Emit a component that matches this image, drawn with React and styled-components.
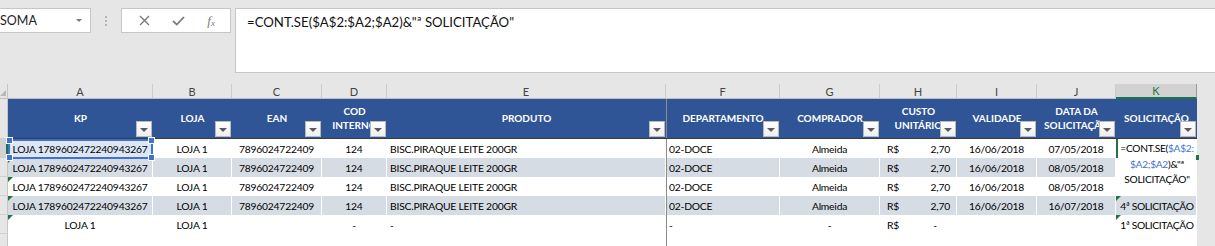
import React from 'react';
import styled, { createGlobalStyle, css } from 'styled-components';

const COLS = [145, 79, 90, 65, 279, 114, 100, 77, 80, 79, 81];
const LETTERS = ['A', 'B', 'C', 'D', 'E', 'F', 'G', 'H', 'I', 'J', 'K'];
const GRID = `8px ${COLS.map((w) => `${w}px`).join(' ')} 1fr`;
const GREEN = '#217346';
const REF_BLUE = '#3f73d0';

const HEADERS = [
  ['KP'],
  ['LOJA'],
  ['EAN'],
  ['COD', 'INTERNO'],
  ['PRODUTO'],
  ['DEPARTAMENTO'],
  ['COMPRADOR'],
  ['CUSTO', 'UNITÁRIO'],
  ['VALIDADE'],
  ['DATA DA', 'SOLICITAÇÃO'],
  ['SOLICITAÇÃO'],
];

const item = (data, sol) => ({
  kp: 'LOJA 1789602472240943267',
  loja: 'LOJA 1',
  ean: '7896024722409',
  cod: '124',
  produto: 'BISC.PIRAQUE LEITE 200GR',
  dep: '02-DOCE',
  comp: 'Almeida',
  custo: '2,70',
  val: '16/06/2018',
  data,
  sol,
});

const ROWS = [
  item('07/05/2018', null),
  item('08/05/2018', null),
  item('08/05/2018', null),
  item('16/07/2018', '4ª SOLICITAÇÃO'),
  {
    kp: 'LOJA 1',
    loja: 'LOJA 1',
    ean: '',
    cod: '-',
    produto: '-',
    dep: '-',
    comp: '-',
    custo: '-',
    val: '',
    data: '',
    sol: '1ª SOLICITAÇÃO',
  },
];

const GlobalStyle = createGlobalStyle`
  html, body {
    margin: 0;
    padding: 0;
    background: #e6e6e6;
    overflow: hidden;
  }
  body {
    font-family: Lato, "Liberation Sans", sans-serif;
    color: #000;
  }
`;

const Page = styled.div`
  width: 1215px;
  height: 246px;
  overflow: hidden;
  background: #e6e6e6;
`;

/* ---------- formula bar ---------- */

const Toolbar = styled.div`
  height: 84px;
  display: flex;
  align-items: flex-start;
  padding-top: 8px;
  box-sizing: border-box;
`;

const NameBox = styled.div`
  width: 97px;
  height: 25px;
  margin-left: -6px;
  box-sizing: border-box;
  border: 1px solid #c6c6c6;
  background: #fff;
  display: flex;
  align-items: center;
  justify-content: space-between;
  padding: 0 8px 0 5px;
  font-size: 12.5px;
  color: #222;

  &::after {
    content: '';
    border-top: 3px solid #7a7a7a;
    border-left: 3px solid transparent;
    border-right: 3px solid transparent;
  }
`;

const Grip = styled.div`
  width: 2px;
  height: 10px;
  margin: 8px 14px 0 14px;
  background: repeating-linear-gradient(#b4b4b4 0 2px, transparent 2px 4px);
`;

const ActionBox = styled.div`
  width: 110px;
  height: 25px;
  box-sizing: border-box;
  border: 1px solid #c6c6c6;
  background: #fff;
  display: flex;
  align-items: center;
  justify-content: space-around;
  padding: 0 4px 0 6px;
  color: #7a7a7a;
`;

const Fx = styled.span`
  font-family: "Liberation Serif", serif;
  font-style: italic;
  font-size: 13px;
  color: #7a7a7a;

  sub {
    font-size: 9px;
    vertical-align: baseline;
    position: relative;
    top: 1px;
  }
`;

const FormulaInput = styled.div`
  flex: 1;
  height: 65px;
  margin-left: 4px;
  margin-right: -4px;
  box-sizing: border-box;
  border: 1px solid #c6c6c6;
  background: #fff;
  padding: 5px 0 0 11px;
  font-size: 13.2px;
  color: #111;
  white-space: pre;
`;

/* ---------- sheet ---------- */

const Row = styled.div`
  display: grid;
  grid-template-columns: ${GRID};
  height: ${(p) => p.$h}px;
`;

const Corner = styled.div`
  position: relative;
  border-right: 1px solid #c6c6c6;
  border-bottom: 1px solid #bdbdbd;

  &::after {
    content: '';
    position: absolute;
    right: 1px;
    bottom: 2px;
    border-bottom: 6px solid #b8b8b8;
    border-left: 6px solid transparent;
  }
`;

const ColLetter = styled.div`
  display: flex;
  align-items: center;
  justify-content: center;
  font-size: 11px;
  color: #444;
  border-right: 1px solid #cbcbcb;
  border-bottom: 1px solid #bdbdbd;
  box-sizing: border-box;
  ${(p) =>
    p.$active &&
    css`
      background: #d2d2d2;
      color: ${GREEN};
      border-bottom: 2px solid ${GREEN};
      border-right-color: #9b9b9b;
    `}
`;

const Gray = styled.div`
  background: #e6e6e6;
`;

const RowHead = styled.div`
  background: ${(p) => (p.$active ? '#d2d2d2' : '#e6e6e6')};
  border-bottom: 1px solid #d0d0d0;
  border-right: ${(p) => (p.$active ? `2px solid ${GREEN}` : '1px solid #c6c6c6')};
  box-sizing: border-box;
`;

const HeadCell = styled.div`
  position: relative;
  background: #2f5597;
  color: #fff;
  font-weight: 700;
  font-size: 10px;
  line-height: 13.5px;
  text-align: center;
  display: flex;
  flex-direction: column;
  align-items: center;
  justify-content: center;
  padding-bottom: 1px;
  white-space: nowrap;
  overflow: hidden;
  box-shadow: inset 0 -1px 0 #3a3a3a ${(p) => (p.$freeze ? ', inset 1px 0 0 #8c8c8c' : '')};
`;

const FilterButton = styled.span`
  position: absolute;
  right: 1px;
  bottom: 2px;
  width: 16px;
  height: 16px;
  box-sizing: border-box;
  border: 1px solid #b9b9b9;
  background: linear-gradient(#fefefe, #eeeeee);
  display: flex;
  align-items: center;
  justify-content: center;

  &::after {
    content: '';
    margin-top: 2px;
    border-top: 4px solid #5a5a5a;
    border-left: 4px solid transparent;
    border-right: 4px solid transparent;
  }
`;

const Cell = styled.div`
  position: relative;
  display: flex;
  align-items: center;
  justify-content: ${(p) =>
    p.$align === 'left' ? 'flex-start' : p.$align === 'between' ? 'space-between' : 'center'};
  padding: 1px ${(p) => (p.$align === 'between' ? '6px 0 7px' : '3px 0')};
  box-sizing: border-box;
  font-size: 10.3px;
  letter-spacing: -0.2px;
  white-space: nowrap;
  background: ${(p) => (p.$band ? '#d6dce4' : '#fff')};
  border-right: 1px solid #fff;
  ${(p) => p.$freeze && css`box-shadow: inset 1px 0 0 #8c8c8c;`}

  ${(p) =>
    p.$flag &&
    css`
      &::before {
        content: '';
        position: absolute;
        top: 0;
        left: 0;
        border-top: 5px solid ${GREEN};
        border-right: 5px solid transparent;
      }
    `}
`;

const Selected = styled(Cell)`
  background: #dce6f4;
  z-index: 2;
`;

const RefBox = styled.div`
  position: absolute;
  inset: 0 -1px -1px 0;
  border: 2px solid ${REF_BLUE};
  pointer-events: none;
`;

const Handle = styled.span`
  position: absolute;
  width: 5px;
  height: 5px;
  background: ${REF_BLUE};
  border: 1px solid #fff;
  ${(p) => (p.$top ? 'top: -4px;' : 'bottom: -4px;')}
  ${(p) => (p.$left ? 'left: -4px;' : 'right: -4px;')}
`;

const Dash = styled.span`
  margin-right: 13px;
`;

const EditCell = styled(Cell)`
  z-index: 3;
  box-shadow: inset 2px 0 0 ${GREEN};
`;

const Editor = styled.div`
  position: absolute;
  top: 0;
  left: 2px;
  width: 78px;
  height: 57px;
  background: #fff;
  padding-top: 2px;
  box-sizing: border-box;
  text-align: center;
  font-size: 10.2px;
  letter-spacing: -0.3px;
  line-height: 15.5px;
  white-space: nowrap;
`;

const FillHandle = styled.span`
  position: absolute;
  right: -3px;
  top: 16px;
  width: 3px;
  height: 5px;
  background: ${GREEN};
`;

const Ref = styled.span`
  color: ${REF_BLUE};
`;

const SolCell = styled(Cell)`
  letter-spacing: -0.35px;
  padding-left: 5px;
`;

const XIcon = () => (
  <svg width="11" height="11" viewBox="0 0 11 11">
    <path d="M1 1 L10 10 M10 1 L1 10" stroke="#7a7a7a" strokeWidth="1.4" />
  </svg>
);

const CheckIcon = () => (
  <svg width="13" height="10" viewBox="0 0 13 10">
    <path d="M1 5 L4.8 8.6 L12 1" stroke="#7a7a7a" strokeWidth="1.8" fill="none" />
  </svg>
);

const DataRow = ({ r, i }) => {
  const band = i % 2 === 1;
  const first = i === 0;
  const KCell = () => {
    if (first) {
      return (
        <EditCell>
          <Editor>
            =CONT.SE(<Ref>$A$2:</Ref>
            <br />
            <Ref>$A2;$A2</Ref>)&amp;"ª
            <br />
            SOLICITAÇÃO"
          </Editor>
          <FillHandle />
        </EditCell>
      );
    }
    if (i === 1 || i === 2) return <Cell />;
    return (
      <SolCell $band={band} $flag>
        {r.sol}
      </SolCell>
    );
  };

  return (
    <Row $h={19}>
      <RowHead $active={first} />
      {first ? (
        <Selected>
          {r.kp}
          <RefBox>
            <Handle $top $left />
            <Handle $top />
            <Handle $left />
            <Handle />
          </RefBox>
        </Selected>
      ) : (
        <Cell $band={band} $flag>
          {r.kp}
        </Cell>
      )}
      <Cell $band={band}>{r.loja}</Cell>
      <Cell $band={band}>{r.ean}</Cell>
      <Cell $band={band}>{r.cod}</Cell>
      <Cell $band={band} $align="left">
        {r.produto}
      </Cell>
      <Cell $band={band} $align="left" $freeze>
        {r.dep}
      </Cell>
      <Cell $band={band}>{r.comp}</Cell>
      <Cell $band={band} $align="between">
        <span>R$</span>
        {r.custo === '-' ? <Dash>-</Dash> : <span>{r.custo}</span>}
      </Cell>
      <Cell $band={band}>{r.val}</Cell>
      <Cell $band={band}>{r.data}</Cell>
      <KCell />
      <Gray />
    </Row>
  );
};

export default function App() {
  return (
    <Page>
      <GlobalStyle />
      <Toolbar>
        <NameBox>SOMA</NameBox>
        <Grip />
        <ActionBox>
          <XIcon />
          <CheckIcon />
          <Fx>
            f<sub>x</sub>
          </Fx>
        </ActionBox>
        <FormulaInput>=CONT.SE($A$2:$A2;$A2)&amp;"ª SOLICITAÇÃO"</FormulaInput>
      </Toolbar>

      <Row $h={15}>
        <Corner />
        {LETTERS.map((l) => (
          <ColLetter key={l} $active={l === 'K'}>
            {l}
          </ColLetter>
        ))}
        <Gray />
      </Row>

      <Row $h={40}>
        <RowHead />
        {HEADERS.map((lines, idx) => (
          <HeadCell key={idx} $freeze={idx === 5}>
            {lines.map((t) => (
              <span key={t}>{t}</span>
            ))}
            <FilterButton />
          </HeadCell>
        ))}
        <Gray />
      </Row>

      {ROWS.map((r, i) => (
        <DataRow key={i} r={r} i={i} />
      ))}

      <Row $h={19}>
        <RowHead />
        {LETTERS.map((l) => (
          <Cell key={l} $freeze={l === 'F'} />
        ))}
        <Gray />
      </Row>
    </Page>
  );
}
